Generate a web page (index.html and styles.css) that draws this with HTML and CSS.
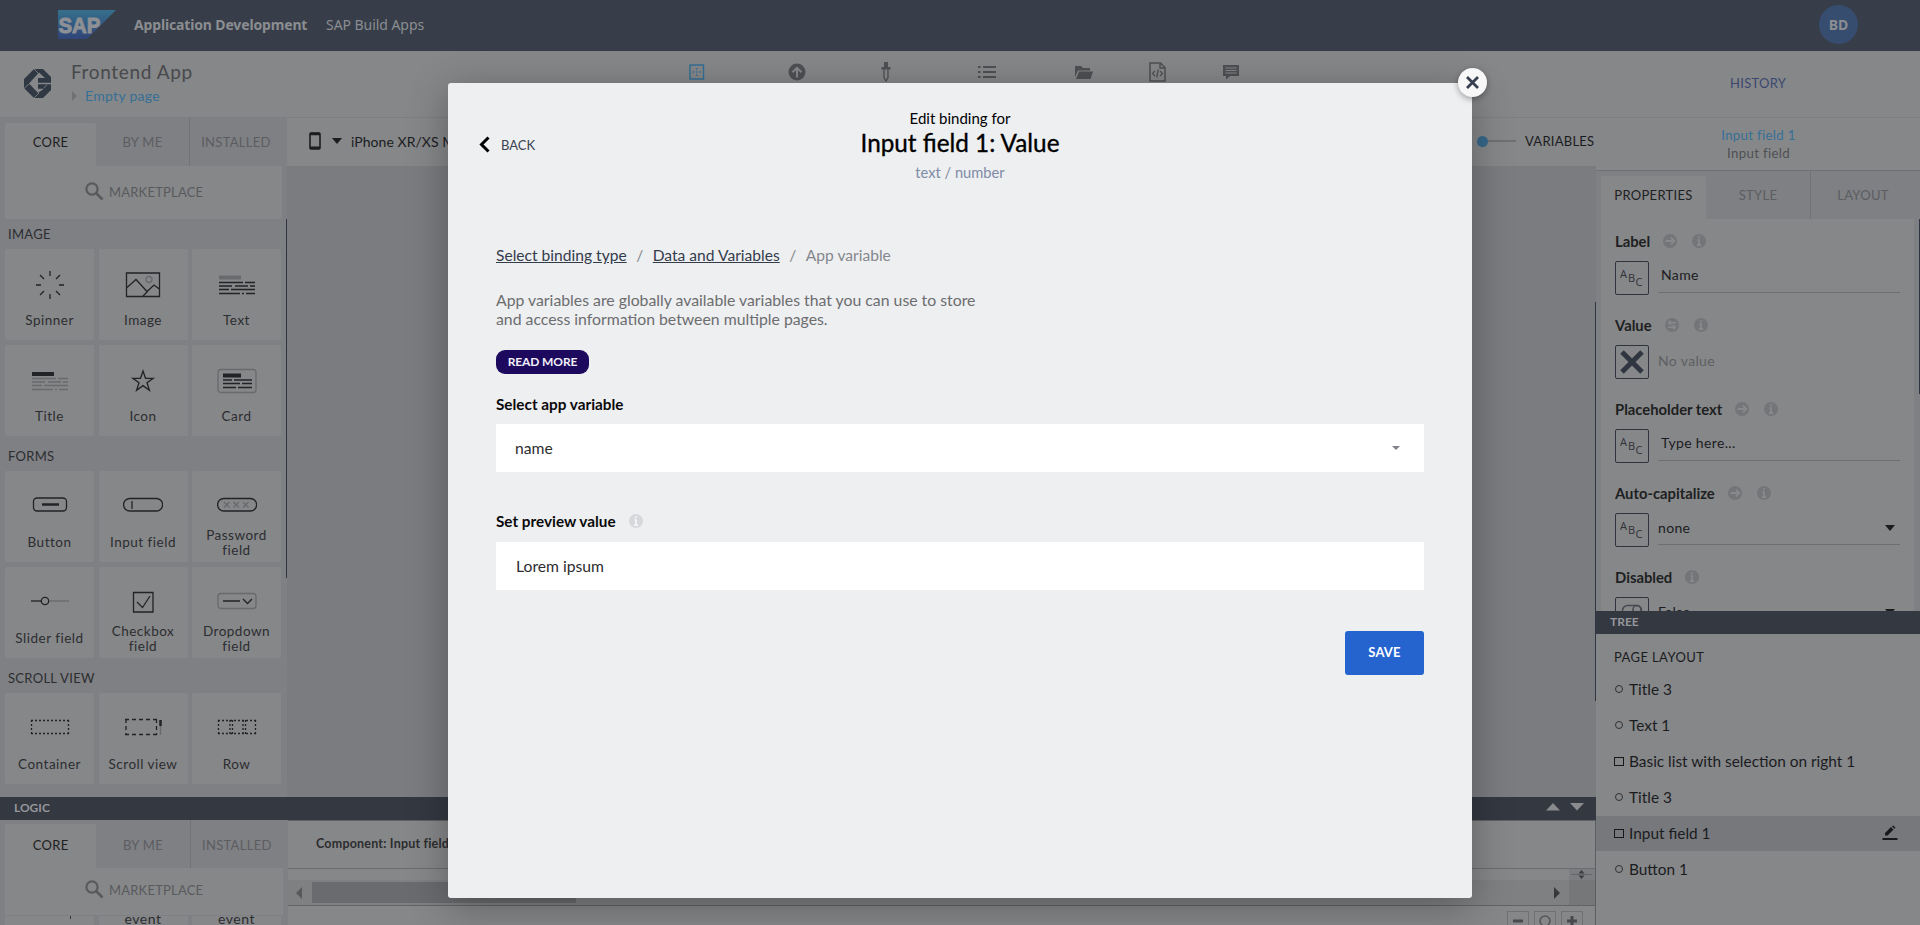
FILE: index.html
```html
<!DOCTYPE html>
<html lang="en">
<head>
<meta charset="utf-8">
<title>SAP Build Apps</title>
<link rel="stylesheet" href="styles.css">
</head>
<body>
<div class="app">
  <header class="shell">
    <svg class="sap" width="58" height="29" viewBox="0 0 58 29"><defs><linearGradient id="g" x1="0" y1="0" x2="0" y2="1"><stop offset="0" stop-color="#366f8c"/><stop offset="1" stop-color="#304578"/></linearGradient></defs><path d="M0 0H58L29 29H0z" fill="url(#g)"/><text x="0.5" y="22.5" textLength="42" lengthAdjust="spacingAndGlyphs" class="sap-text">SAP</text></svg>
    <b class="shell-title">Application Development</b>
    <span class="shell-sub">SAP Build Apps</span>
    <span class="avatar">BD</span>
  </header>
  <div class="toolbar">
    <svg class="logo" width="27" height="29" viewBox="0 0 27 29"><path d="M10 0H19L27 8V13.700H14V9H21L15 3.500L5 14.500L14 24L20 19.700H14V15.300H27V21L19 29H10L0 19V10z" fill="#303843"/><path d="M10 0l5 5M0 19.500l5.500-5M10 29l5-5M20 19l3-3.500" stroke="#868789" stroke-width=".8"/></svg>
    <div class="names"><div class="app-name">Frontend App</div><div class="page-name"><i class="tri-r"></i><span>Empty page</span></div></div>
    <div class="tools">
      <svg width="16" height="16" viewBox="0 0 16 16"><rect x="1" y="1" width="13.500" height="14" fill="none" stroke="#356f94" stroke-width="1.500"/><path d="M7 4h1.500v1.500H7zM7 7.200h1.500v1.500H7zM7 10.500h1.500V12H7zM3.700 7.200h1.500v1.500H3.700zM10.300 7.200h1.500v1.500h-1.500z" fill="#356f94"/></svg>
      <svg width="18" height="18" viewBox="0 0 18 18"><circle cx="9" cy="9" r="8.500" fill="#4f5053"/><path d="M9 14.500V5M4.500 9.300L9 4.800l4.500 4.500" fill="none" stroke="#868789" stroke-width="2"/></svg>
      <svg width="10" height="20" viewBox="0 0 10 20"><path d="M3 0h4v5h2.500v2.500H.5V5H3z" fill="#4f5053"/><path d="M3 7v8.500L5 19l2-3.500V7" fill="none" stroke="#4f5053" stroke-width="1.300"/></svg>
      <svg width="18" height="14" viewBox="0 0 18 14"><path d="M0 2h2.500M0 7h2.500M0 12h2.500M5 2h13M5 7h13M5 12h13" stroke="#4f5053" stroke-width="2.200"/></svg>
      <svg width="18" height="15" viewBox="0 0 18 15"><path d="M0 1h6l2 2h7v2.500H3L0 12z M4 6.500h14L15.500 14H1z" fill="#4f5053"/></svg>
      <svg width="17" height="20" viewBox="0 0 17 20"><path d="M1 1h10.500L16 5.500V19H1z M11 1v5h5" fill="none" stroke="#4f5053" stroke-width="1.500"/><path d="M6 9l-2.500 2.500L6 14M11 9l2.500 2.500L11 14M9.300 7.500l-1.600 8" fill="none" stroke="#4f5053" stroke-width="1.300"/></svg>
      <svg width="18" height="16" viewBox="0 0 18 16"><path d="M1 1h16v11H8l-4 3.500V12H1z" fill="#4f5053"/><path d="M3.500 4h11M3.500 6.500h11M3.500 9h11" stroke="#868789" stroke-width="1.100"/></svg>
    </div>
    <span class="history">HISTORY</span>
  </div>

  <div class="main">
    <div class="work">
      <div class="upper">
        <aside class="left">
          <div class="tabs"><span class="tab on">CORE</span><span class="tab">BY ME</span><span class="tab sep">INSTALLED</span></div>
          <div class="market"><svg width="19" height="19" viewBox="0 0 19 19"><circle cx="7" cy="7" r="5.600" fill="none" stroke="#595a5d" stroke-width="2.200"/><path d="M11 11l6.500 6.500" stroke="#595a5d" stroke-width="2.600"/></svg><span>MARKETPLACE</span></div>
          <h4>IMAGE</h4>
          <div class="tiles">
            <div class="tile"><svg viewBox="0 0 40 32"><path d="M20 2v5M20 25v5M6 16h5M29 16h5M10 6l4 4M30 6l-4 4M10 26l4-4M30 26l-4-4" class="s"/></svg><span>Spinner</span></div>
            <div class="tile"><svg viewBox="0 0 40 32"><path d="M3.500 4h33v23.500h-33zM4 18.500l9-8 11 12L31 16l6 4.500M20 27l5-5" class="s"/><circle cx="26" cy="10.500" r="3" class="s lt"/></svg><span>Image</span></div>
            <div class="tile"><svg viewBox="0 0 40 32"><path d="M2 8.500h22" class="s lt fat"/><path d="M2 13.500h24M28 13.500h10M2 17h13M18 17h13M33 17h5M2 20.500h10M14 20.500h24M2 24.500h21M25 24.500h2M29 24.500h9" class="s"/></svg><span>Text</span></div>
            <div class="tile"><svg viewBox="0 0 40 32"><path d="M2 9h22" class="s fat"/><path d="M2 13.500h24M28 13.500h10M2 17h13M18 17h13M33 17h5M2 20.500h10M14 20.500h24M2 24.500h21M25 24.500h2M29 24.500h9" class="s lt"/></svg><span>Title</span></div>
            <div class="tile"><svg viewBox="0 0 40 32"><path d="M20 6l2.500 7.300h7.700l-6.200 4.500 2.400 7.400-6.400-4.600-6.400 4.600 2.400-7.400-6.200-4.500h7.700z" class="s"/></svg><span>Icon</span></div>
            <div class="tile"><svg viewBox="0 0 40 32"><rect x="1" y="4.500" width="38" height="23" rx="3" class="s lt"/><path d="M6 10.500h18" class="s fat"/><path d="M6 15h9M17 15h18M6 18.500h17M25 18.500h10M6 22.500h13M21 22.500h14" class="s"/></svg><span>Card</span></div>
          </div>
          <h4 class="h2">FORMS</h4>
          <div class="tiles up">
            <div class="tile"><svg viewBox="0 0 40 32"><rect x="3.500" y="10" width="33" height="13" rx="3.500" class="s"/><path d="M12 16.500h17" class="s mid"/></svg><span>Button</span></div>
            <div class="tile"><svg viewBox="0 0 40 32"><rect x=".6" y="10.500" width="39" height="12.500" rx="6.200" class="s"/><path d="M9 13v8" class="s"/></svg><span>Input field</span></div>
            <div class="tile"><svg viewBox="0 0 40 32"><rect x=".6" y="10.500" width="39" height="12.500" rx="6.200" class="s"/><path d="M7 14l5.500 5.500M12.500 14L7 19.500M16.500 14l5.500 5.500M22 14l-5.500 5.500M26 14l5.500 5.500M31.500 14L26 19.500" class="s lt"/></svg><span>Password field</span></div>
            <div class="tile"><svg viewBox="0 0 40 32"><path d="M1 17h10" class="s"/><circle cx="15" cy="17" r="3.700" class="s"/><path d="M19 17h20" class="s lt"/></svg><span>Slider field</span></div>
            <div class="tile"><svg viewBox="0 0 40 32"><path d="M10.500 8.500h19.500V28h-19.500zM14 18l5.500 5.500L27 12" class="s"/></svg><span>Checkbox field</span></div>
            <div class="tile"><svg viewBox="0 0 40 32"><rect x="1" y="9.500" width="38" height="15" rx="3" class="s lt"/><path d="M6 17h17M26 15l4.500 4.500L35 15" class="s"/></svg><span>Dropdown field</span></div>
          </div>
          <h4 class="h3">SCROLL VIEW</h4>
          <div class="tiles up">
            <div class="tile"><svg viewBox="0 0 40 32"><path d="M1 10.500h39M1 23.500h39M1.500 10v14M38.500 10v14" class="s d"/></svg><span>Container</span></div>
            <div class="tile"><svg viewBox="0 0 40 32"><path d="M2 9.500h32M2 24.500h32M3 9v16M33.500 9v16" class="s" stroke-dasharray="4 3"/><path d="M37.500 10v15" class="s lt"/><path d="M37.500 10v6" class="s mid"/></svg><span>Scroll view</span></div>
            <div class="tile"><svg viewBox="0 0 40 32"><path d="M1 10.500h39M1 23.500h39M1.500 10v14M13 10v14M15.500 10v14M26 10v14M28.500 10v14M38.500 10v14" class="s d"/></svg><span>Row</span></div>
          </div>
          <i class="thumb left-thumb"></i>
        </aside>
        <section class="center">
          <div class="device"><svg width="12" height="18" viewBox="0 0 12 18"><rect x="1" y="1" width="10" height="16" rx="1" fill="none" stroke="#1c1d1f" stroke-width="1.600"/><path d="M1 2h10M1 15.700h10" stroke="#1c1d1f" stroke-width="2.400"/></svg><i class="caret"></i><span>iPhone XR/XS Max</span><span class="toggle"><i></i><b></b></span><span class="vars">VARIABLES</span></div>
          <i class="thumb canvas-thumb"></i>
        </section>
      </div>
      <div class="bar logic"><span>LOGIC</span><svg width="38" height="8" viewBox="0 0 38 8"><path d="M0 7.500L7 0l7 7.500zM24 0h14l-7 7.500z" fill="#8a8b8e"/></svg></div>
      <div class="lower">
        <aside class="left2">
          <div class="tabs t2"><span class="tab on">CORE</span><span class="tab">BY ME</span><span class="tab sep">INSTALLED</span></div>
          <div class="market m2"><svg width="19" height="19" viewBox="0 0 19 19"><circle cx="7" cy="7" r="5.600" fill="none" stroke="#595a5d" stroke-width="2.200"/><path d="M11 11l6.500 6.500" stroke="#595a5d" stroke-width="2.600"/></svg><span>MARKETPLACE</span></div>
          <div class="tiles events"><div class="tile"><i class="tick"></i></div><div class="tile">event</div><div class="tile">event</div></div>
        </aside>
        <section class="flow">
          <div class="component">Component: Input field 1</div>
          <div class="ruler"><svg width="26" height="11" viewBox="0 0 26 11"><path d="M2 5.500h21" stroke="#646568"/><path d="M9.500 4.500L12.500 1l3 3.500zM9.500 6.500l3 3.500 3-3.500z" fill="#3c3d40"/></svg></div>
          <div class="hscroll"><i class="tri-l"></i><i class="hthumb"></i><i class="tri-r2"></i><i class="corner"></i></div>
          <div class="zooms"><span><svg width="12" height="12"><path d="M1 6h10" stroke="#48494c" stroke-width="3"/></svg></span><span><svg width="12" height="12"><circle cx="6" cy="6" r="5" fill="none" stroke="#56575a" stroke-width="1.600"/></svg></span><span><svg width="12" height="12"><path d="M1 6h10M6 1v10" stroke="#48494c" stroke-width="3"/></svg></span></div>
        </section>
      </div>
    </div>

    <aside class="right">
      <div class="selected"><span class="sel-name">Input field 1</span><span class="sel-type">Input field</span></div>
      <div class="tabs rt"><span class="tab on">PROPERTIES</span><span class="tab">STYLE</span><span class="tab sep">LAYOUT</span></div>
      <div class="props">
        <div class="prop"><div class="plabel"><span>Label</span><svg class="ic"><use href="#arrow"/></svg><svg class="ic"><use href="#info"/></svg></div><div class="prow"><span class="box"><svg width="24" height="20"><use href="#abc"/></svg></span><span class="val">Name</span></div></div>
        <div class="prop"><div class="plabel"><span>Value</span><svg class="ic"><use href="#swap"/></svg><svg class="ic"><use href="#info"/></svg></div><div class="prow"><span class="box"><svg width="24" height="24" viewBox="0 0 24 24"><path d="M2 2l20 20M22 2L2 22" stroke="#303641" stroke-width="5"/></svg></span><span class="val none">No value</span></div></div>
        <div class="prop"><div class="plabel"><span>Placeholder text</span><svg class="ic"><use href="#arrow"/></svg><svg class="ic"><use href="#info"/></svg></div><div class="prow"><span class="box"><svg width="24" height="20"><use href="#abc"/></svg></span><span class="val">Type here...</span></div></div>
        <div class="prop"><div class="plabel"><span>Auto-capitalize</span><svg class="ic"><use href="#arrow"/></svg><svg class="ic"><use href="#info"/></svg></div><div class="prow"><span class="box"><svg width="24" height="20"><use href="#abc"/></svg></span><span class="val drop">none<i class="caret"></i></span></div></div>
        <div class="prop"><div class="plabel"><span>Disabled</span><svg class="ic"><use href="#info"/></svg></div><div class="prow"><span class="box"><svg width="22" height="20" viewBox="0 0 22 20"><rect x="1.500" y="1.500" width="19" height="14" rx="5" fill="none" stroke="#454850" stroke-width="1.500"/><rect x="12" y="1.500" width="8" height="14" rx="4" fill="none" stroke="#454850" stroke-width="1.500"/></svg></span><span class="val drop">False<i class="caret"></i></span></div></div>
      </div>
      <div class="bar tree"><span>TREE</span></div>
      <div class="nodes">
        <div class="nhead">PAGE LAYOUT</div>
        <div class="node"><i class="dot"></i>Title 3</div>
        <div class="node"><i class="dot"></i>Text 1</div>
        <div class="node"><i class="sq"></i>Basic list with selection on right 1</div>
        <div class="node"><i class="dot"></i>Title 3</div>
        <div class="node cur"><i class="sq"></i>Input field 1<svg class="pen" width="16" height="16" viewBox="0 0 16 16"><path d="M.5 14h15" stroke="#17181a" stroke-width="2"/><path d="M3 8l6-6 2.500 2.500-6 6H3zM10 1.500l1-1 2.500 2-1 1.200z" fill="#17181a"/></svg></div>
        <div class="node"><i class="dot"></i>Button 1</div>
      </div>
      <i class="thumb right-thumb"></i>
    </aside>
  </div>
</div>

<div class="modal">
  <button class="close"><svg width="13" height="13" viewBox="0 0 13 13"><path d="M1 1l11 11M12 1L1 12" stroke="#363e4f" stroke-width="2.800"/></svg></button>
  <div class="mhead">
    <div class="back"><svg width="11" height="17" viewBox="0 0 11 17"><path d="M9.500 1.500L2.500 8.500l7 7" fill="none" stroke="#000" stroke-width="3"/></svg><span>BACK</span></div>
    <div class="mtitle"><div class="m1">Edit binding for</div><div class="m2t">Input field 1: Value</div><div class="m3">text / number</div></div>
  </div>
  <div class="crumbs"><a>Select binding type</a><span>/</span><a>Data and Variables</a><span>/</span><em>App variable</em></div>
  <p class="desc">App variables are globally available variables that you can use to store<br>and access information between multiple pages.</p>
  <div class="more">READ MORE</div>
  <div class="lab"><span>Select app variable</span></div>
  <div class="field"><span>name</span><i class="fcaret"></i></div>
  <div class="lab l2"><span>Set preview value</span><svg class="ic"><use href="#infoL"/></svg></div>
  <div class="field f2"><span>Lorem ipsum</span></div>
  <div class="save">SAVE</div>
</div>

<svg class="defs" width="0" height="0">
  <symbol id="info" viewBox="0 0 14 14"><circle cx="7" cy="7" r="7" fill="#747578"/><path d="M7 2.200v2M7 5.500V11.500M5.500 6h1.500M5 11h4" stroke="#88898b" stroke-width="1.800"/></symbol>
  <symbol id="infoL" viewBox="0 0 14 14"><circle cx="7" cy="7" r="7" fill="#d6d8dc"/><path d="M7 2.200v2M7 5.500V11.500M5.500 6h1.500M5 11h4" stroke="#f2f3f5" stroke-width="1.800"/></symbol>
  <symbol id="arrow" viewBox="0 0 14 14"><circle cx="7" cy="7" r="7" fill="#747578"/><path d="M2.500 7h7M8 3.700L11.300 7 8 10.300" fill="none" stroke="#88898b" stroke-width="1.900"/></symbol>
  <symbol id="swap" viewBox="0 0 14 14"><circle cx="7" cy="7" r="7" fill="#747578"/><path d="M3.500 4.700H11M6 2.500L3.500 4.700 6 7M10.500 9.300H3M8 7l2.500 2.300L8 11.500" fill="none" stroke="#88898b" stroke-width="1.500"/></symbol>
  <symbol id="abc" viewBox="0 0 24 20"><g class="abc"><text x="0" y="9.500">A</text><text x="8" y="13.500">B</text><text x="15.500" y="17.500">C</text></g></symbol>
</svg>
</body>
</html>
```

FILE: styles.css
```css
* { box-sizing: border-box; }
body { margin: 0; width: 1920px; height: 925px; overflow: hidden; font-family: Lato, "Open Sans", sans-serif; font-size: 14px; color: #1b1c1f; background: #868789; }
svg, i { display: block; flex: none; }
span, b { white-space: nowrap; }
.defs { position: absolute; }
.app { height: 925px; display: flex; flex-direction: column; }
.shell { height: 51px; flex: none; background: #373e49; display: flex; align-items: center; padding: 0 62px 3px 58px; color: #8b8d91; font-family: "Noto Sans", sans-serif; font-size: 14px; }
.sap-text { font: 700 22px "Liberation Sans", sans-serif; fill: #8d9094; stroke: #8d9094; stroke-width: 1; }
.shell-title { margin-left: 18px; letter-spacing: -.15px; width: 192px; }
.shell-sub { letter-spacing: -.05px; }
.avatar { margin-left: auto; width: 39px; height: 39px; border-radius: 50%; background: #364d70; font-weight: 700; display: flex; align-items: center; justify-content: center; }
.toolbar { height: 67px; flex: none; display: flex; border-bottom: 1px solid #7e7f82; }
.logo { margin: 18px 0 0 24px; }
.names { margin: 9px 0 0 20px; width: 618px; }
.app-name { font-size: 19px; line-height: 24px; color: #48494c; letter-spacing: .65px; }
.page-name { font-size: 14px; color: #366f96; display: flex; align-items: center; gap: 8px; line-height: 24px; letter-spacing: .3px; margin-left: 1px; }
.tri-r { border: 5px solid transparent; border-left-color: #707174; border-right: 0; }
.tools { width: 551px; display: flex; justify-content: space-between; height: 20px; margin-top: 11px; align-items: center; }
.tools svg:nth-child(2) { margin-left: 57px; }
.tools svg:nth-child(3) { margin-left: 49px; }
.tools svg:nth-child(4) { margin-left: 61px; }
.tools svg:nth-child(5) { margin-left: 53px; }
.tools svg:nth-child(6) { margin-left: 30px; }
.tools svg:nth-child(7) { margin-left: 30px; }
.history { margin: 23px 0 0 490px; font-size: 13px; line-height: 18px; color: #3c4770; letter-spacing: .3px; }
.main { flex: 1; min-height: 0; display: flex; }
.work { width: 1596px; display: flex; flex-direction: column; }
.upper { height: 679px; display: flex; }
.left, .left2 { position: relative; width: 287px; background: #7f8084; padding: 5px 5px 0; }
.tabs { display: flex; height: 43px; }
.tab { width: 94px; display: flex; align-items: center; justify-content: center; color: #5c5d61; font-size: 13px; letter-spacing: .3px; padding-bottom: 5px; }
.tab.on { width: 92px; background: #868789; color: #1f2022; border-radius: 2px 2px 0 0; }
.tab.sep { border-left: 1px solid #727377; margin-top: -5px; padding-top: 5px; }
.market { width: 277px; height: 53px; background: #868789; display: flex; align-items: center; gap: 5px; padding: 0 0 2px 80px; color: #595a5d; font-size: 13px; letter-spacing: .2px; }
.left h4 { margin: 0; padding-left: 3px; height: 30px; line-height: 30px; font-size: 13px; font-weight: 400; letter-spacing: .3px; color: #2c2d30; }
.left .h2, .left .h3 { height: 35px; line-height: 40px; }
.tiles { display: grid; grid-template-columns: repeat(3, 89px); column-gap: 4.500px; row-gap: 5px; }
.tile { height: 91px; background: #868789; border-radius: 2px; display: flex; flex-direction: column; align-items: center; padding-top: 20px; color: #2c2d30; font-size: 14px; letter-spacing: .5px; }
.tile svg { width: 40px; height: 32px; }
.up .tile { padding-top: 17px; }
.up .tile svg { margin-bottom: 3px; }
.tile span { height: 39px; display: flex; align-items: center; text-align: center; white-space: normal; line-height: 15px; width: 72px; justify-content: center; font-size: 13.500px; }
.s { fill: none; stroke: #222326; stroke-width: 1.300; }
.s.lt { stroke: #696a6d; }
.s.fat { stroke-width: 4; }
.s.mid { stroke-width: 2.500; }
.s.d { stroke-dasharray: 2 2; }
.thumb { position: absolute; background: #303544; width: 1px; }
.left-thumb { left: 286px; top: 101px; height: 359px; }
.canvas-thumb { right: 0; top: 184px; height: 399px; }
.right-thumb { right: 0; top: 101px; height: 175px; }
.center { flex: 1; background: #7b7c80; position: relative; }
.device { height: 48px; background: #868789; display: flex; align-items: center; padding: 0 0 2px 22px; font-size: 14px; letter-spacing: .05px; }
.caret { border: 5px solid transparent; border-top: 6px solid #1b1c1e; border-bottom: 0; }
.device .caret { margin: 0 9px 0 11px; }
.toggle { margin-left: auto; display: flex; align-items: center; }
.toggle i { width: 11px; height: 11px; border-radius: 50%; background: #37688a; }
.toggle b { width: 28px; height: 2px; background: #6f7073; }
.vars { margin-left: 9px; width: 71px; font-size: 13px; letter-spacing: .25px; }
.bar { height: 23px; background: #343841; color: #95969a; font-size: 12px; font-weight: 700; display: flex; align-items: center; justify-content: space-between; padding: 0 12px 2px 14px; }
.bar svg { margin-top: -1px; }
.lower { flex: 1; min-height: 0; display: flex; overflow: hidden; }
.left2 { width: 288px; padding-top: 4px; }
.t2 { height: 44px; }
.t2 .tab { padding-bottom: 3px; }
.m2 { width: 278px; height: 47px; padding-bottom: 4px; }
.events .tile { padding: 0; margin-top: 1px; height: 20px; line-height: 5px; font-size: 14px; border-radius: 0; }
.tick { width: 1px; height: 3px; background: #333; margin-left: 42px; }
.flow { flex: 1; border-right: 1px solid #5d5e61; border-top: 1px solid #606164; }
.component { height: 48px; border-bottom: 1px solid #6b6c6f; padding-left: 28px; line-height: 46px; font-size: 12.500px; letter-spacing: .2px; font-weight: 700; color: #2c2d2f; }
.ruler { height: 11px; display: flex; justify-content: flex-end; }
.ruler svg { background: #7c7d80; }
.hscroll { height: 26px; background: #7f8082; border-bottom: 1px solid #626366; display: flex; align-items: center; padding-left: 8px; }
.tri-l { border: 6px solid transparent; border-right-color: #58595b; border-left: 0; }
.hthumb { margin-left: 10px; width: 264px; height: 21px; background: #6a6b6e; }
.tri-r2 { margin-left: auto; border: 6px solid transparent; border-left: 6px solid #37383a; border-right: 0; }
.corner { margin-left: 9px; width: 26px; height: 25px; background: #767779; }
.zooms { display: flex; justify-content: flex-end; gap: 5px; padding: 5px 12px 0 0; }
.zooms span { width: 22px; height: 20px; border: 1px solid #707174; padding: 3px 4px; }
.right { position: relative; width: 324px; flex: none; background: #7f8084; display: flex; flex-direction: column; }
.selected { height: 53px; background: #868789; border-bottom: 1px solid #707174; display: flex; flex-direction: column; align-items: center; padding: 8px 0 0 1px; line-height: 18px; letter-spacing: .3px; font-size: 13.300px; }
.sel-name { color: #366f96; }
.sel-type { color: #4f5053; }
.rt { height: 48px; padding: 5px 0 0 5px; }
.rt .tab.on { width: 105px; }
.rt .tab { width: 104px; }
.rt .tab.sep { width: 110px; padding-right: 5px; }
.props { margin-left: 5px; width: 313px; height: 392px; background: #868789; overflow: hidden; padding: 13px 14px 0; }
.prop { height: 84px; }
.plabel { display: flex; align-items: center; height: 18px; font-size: 14.800px; font-weight: 700; color: #1e1f21; }
.ic { width: 14px; height: 14px; margin-left: 13px; }
.ic + .ic { margin-left: 15px; }
.prow { display: flex; margin-top: 11px; }
.box { width: 34px; height: 34px; border: 1px solid #2f333c; border-radius: 2px; display: flex; align-items: center; justify-content: center; }
.abc { font: 11px "Open Sans", sans-serif; fill: #303238; }
.val { margin-left: 9px; width: 242px; height: 32px; border-bottom: 1px solid #6d6e71; padding-left: 3px; line-height: 28px; letter-spacing: .35px; font-size: 14px; }
.val.none { border: 0; padding: 0; color: #5e5f63; line-height: 31px; }
.val.drop { padding: 0 5px 2px 0; display: flex; justify-content: space-between; align-items: center; }
.tree { flex: none; }
.nodes { flex: 1; background: #868789; }
.nhead { height: 38px; padding: 15px 0 0 18px; line-height: 17px; font-size: 13px; letter-spacing: .4px; }
.node { height: 35.900px; display: flex; align-items: center; padding: 0 0 1px 18px; font-size: 15.400px; }
.dot { width: 8px; height: 8px; border: 1.500px solid #2f3033; border-radius: 50%; margin: 0 6px 0 1px; }
.sq { width: 10px; height: 9px; border: 1px solid #17181a; margin-right: 5px; }
.cur { background: #77787c; }
.pen { margin: 0 22px 0 auto; }
.modal { position: absolute; left: 448px; top: 83px; width: 1024px; height: 815px; background: #eeeff1; border-radius: 3px; box-shadow: 0 8px 40px rgba(0,0,0,.3); padding: 25px 48px 0; }
.close { position: absolute; right: -15px; top: -15px; width: 29px; height: 29px; border: 0; border-radius: 50%; background: #f7f7f8; box-shadow: 0 2px 6px rgba(0,0,0,.35); display: flex; align-items: center; justify-content: center; padding: 0; }
.mhead { display: flex; height: 132px; }
.back { display: flex; width: 64px; height: 17px; margin: 28px 0 0 -17px; align-items: center; gap: 11px; font-size: 13px; color: #3b4252; }
.mtitle { flex: 1; text-align: center; margin-right: 47px; }
.m1 { font-size: 15px; line-height: 20px; color: #000; }
.m2t { font-size: 24.300px; line-height: 30px; color: #000; -webkit-text-stroke: .35px #000; }
.m3 { font-size: 14.700px; line-height: 28px; color: #7e8ba6; }
.crumbs { display: flex; height: 32px; align-items: center; font-size: 15.600px; color: #85878c; padding-bottom: 2px; }
.crumbs a { color: #343c4c; text-decoration: underline; }
.crumbs span { margin: 0 9.500px; }
.crumbs em { font-style: normal; }
.desc { margin: 18px 0 0; font-size: 15.800px; line-height: 19px; color: #6c6d6f; white-space: nowrap; }
.more { margin-top: 22px; width: 93px; height: 24px; border-radius: 9px; background: #1d0a5e; color: #f1eff8; font-size: 12px; letter-spacing: -.1px; font-weight: 700; text-align: center; line-height: 23px; }
.lab { height: 50px; display: flex; align-items: center; font-size: 15.300px; font-weight: 700; color: #0a0a0a; padding-top: 9px; }
.lab.l2 { height: 70px; padding-top: 28px; }
.field { height: 48px; background: #fff; display: flex; align-items: center; justify-content: space-between; padding: 0 24px 1px 19px; font-size: 15.700px; color: #2c2d2f; }
.f2 { padding-left: 20px; }
.fcaret { border: 4.500px solid transparent; border-top: 4px solid #80838b; border-bottom: 0; }
.save { margin: 41px 0 0 auto; width: 79px; height: 44px; border-radius: 3px; background: #2563cf; color: #fff; font-size: 13px; letter-spacing: .2px; font-weight: 700; text-align: center; line-height: 43px; }
```
